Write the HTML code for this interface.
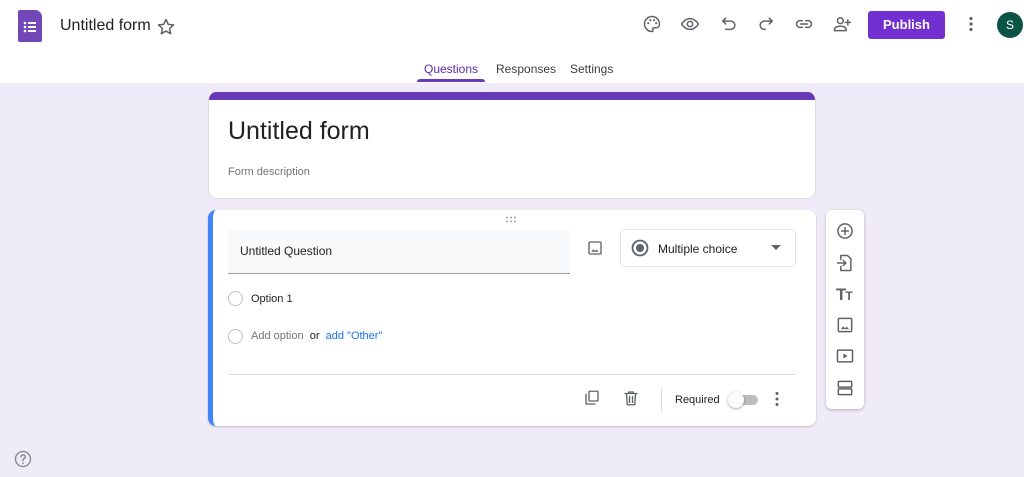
<!DOCTYPE html>
<html><head><meta charset="utf-8"><style>
*{box-sizing:border-box;margin:0;padding:0}
body{width:1024px;height:477px;background:#f0ebf8;font-family:"Liberation Sans",sans-serif;position:relative;overflow:hidden;color:#202124}
.a{position:absolute}
svg{display:block}
.ic{fill:none;stroke:#5f6368;stroke-width:1.8;stroke-linecap:round;stroke-linejoin:round}
</style></head><body>
<div class="a" style="left:0;top:0;width:1024px;height:83px;background:#fff"></div>
<!-- logo -->
<div class="a" style="left:18px;top:10px;width:24px;height:32px;background:#7248b9;border-radius:2px 7px 2px 2px"></div>
<svg class="a" style="left:18px;top:10px" width="24" height="32"><g fill="#fff"><circle cx="7" cy="13" r="1.3"/><circle cx="7" cy="17" r="1.3"/><circle cx="7" cy="21" r="1.3"/><rect x="10" y="12" width="8" height="2"/><rect x="10" y="16" width="8" height="2"/><rect x="10" y="20" width="8" height="2"/></g></svg>
<div class="a" style="left:60px;top:17px;font-size:16px;color:#202124">Untitled form</div>
<svg class="a" style="left:156px;top:17px" width="20" height="20" viewBox="0 0 24 24"><path class="ic" d="M12 3l2.7 5.8 6.3.7-4.7 4.3 1.3 6.2L12 16.9 6.4 20l1.3-6.2L3 9.5l6.3-.7z"/></svg>
<!-- top icons -->
<svg class="a" style="left:642px;top:14px" width="20" height="20" viewBox="0 0 24 24"><path class="ic" d="M12 3a9 9 0 0 0 0 18c1.2 0 1.5-1 1-2-.6-1.2.2-2.5 1.5-2.5H17a4 4 0 0 0 4-4C21 7 17 3 12 3z"/><circle cx="7.5" cy="11" r="1.3" fill="#5f6368"/><circle cx="10" cy="7.5" r="1.3" fill="#5f6368"/><circle cx="14.5" cy="7.5" r="1.3" fill="#5f6368"/><circle cx="17" cy="11" r="1.3" fill="#5f6368"/></svg>
<svg class="a" style="left:680px;top:14px" width="20" height="20" viewBox="0 0 24 24"><path class="ic" d="M2 12s3.5-6.5 10-6.5S22 12 22 12s-3.5 6.5-10 6.5S2 12 2 12z"/><circle class="ic" cx="12" cy="12" r="3.2"/></svg>
<svg class="a" style="left:719px;top:14px" width="20" height="20" viewBox="0 0 24 24"><path class="ic" d="M8 5L4.5 8.5 8 12M4.5 8.5H14a5 5 0 0 1 0 10H8"/></svg>
<svg class="a" style="left:756px;top:14px" width="20" height="20" viewBox="0 0 24 24"><path class="ic" d="M16 5l3.5 3.5L16 12M19.5 8.5H10a5 5 0 0 0 0 10h1"/></svg>
<svg class="a" style="left:794px;top:14px" width="20" height="20" viewBox="0 0 24 24"><path class="ic" d="M10 8H7a4 4 0 0 0 0 8h3M14 8h3a4 4 0 0 1 0 8h-3M8 12h8"/></svg>
<svg class="a" style="left:832px;top:14px" width="20" height="20" viewBox="0 0 24 24"><circle class="ic" cx="10" cy="8" r="3.5"/><path class="ic" d="M3 20v-1.5c0-2.5 4-4 7-4s7 1.5 7 4V20zM19 7v6M16 10h6"/></svg>
<div class="a" style="left:868px;top:11px;width:77px;height:28px;background:#7330d0;border-radius:3px;color:#fff;font-size:13px;font-weight:bold;text-align:center;line-height:28px">Publish</div>
<svg class="a" style="left:961px;top:14px" width="20" height="20"><g fill="#5f6368"><circle cx="10" cy="4.5" r="1.6"/><circle cx="10" cy="10" r="1.6"/><circle cx="10" cy="15.5" r="1.6"/></g></svg>
<div class="a" style="left:997px;top:12px;width:26px;height:26px;border-radius:50%;background:#0b5345;color:#fff;font-size:12px;text-align:center;line-height:26px">S</div>
<!-- tabs -->
<div class="a" style="left:424px;top:62px;font-size:12px;color:#5e2ca5">Questions</div>
<div class="a" style="left:417px;top:79px;width:68px;height:3px;background:#673ab7;border-radius:3px 3px 0 0"></div>
<div class="a" style="left:496px;top:62px;font-size:12px;color:#3c4043">Responses</div>
<div class="a" style="left:570px;top:62px;font-size:12px;color:#3c4043">Settings</div>
<!-- title card -->
<div class="a" style="left:208px;top:92px;width:608px;height:107px;background:#fff;border-radius:8px;overflow:hidden;border:1px solid #dadce0;border-top:none"><div style="height:8px;background:#673ab7"></div></div>
<div class="a" style="left:228px;top:117px;font-size:25px;color:#202124">Untitled form</div>
<div class="a" style="left:228px;top:166px;font-size:11px;color:#70757a">Form description</div>
<!-- question card -->
<div class="a" style="left:208px;top:210px;width:608px;height:216px;background:#fff;border-radius:8px;border-left:5px solid #4285f4;box-shadow:0 1px 2px rgba(0,0,0,.2)"></div>
<svg class="a" style="left:505px;top:216px" width="14" height="8"><g fill="#9aa0a6"><circle cx="2" cy="1.5" r="1"/><circle cx="6" cy="1.5" r="1"/><circle cx="10" cy="1.5" r="1"/><circle cx="2" cy="5.5" r="1"/><circle cx="6" cy="5.5" r="1"/><circle cx="10" cy="5.5" r="1"/></g></svg>
<div class="a" style="left:228px;top:230px;width:342px;height:44px;background:#f8f9fa;border-bottom:1px solid #9aa0a6"></div>
<div class="a" style="left:240px;top:244px;font-size:12px;color:#202124">Untitled Question</div>
<svg class="a" style="left:586px;top:239px" width="18" height="18" viewBox="0 0 24 24"><rect class="ic" x="4" y="4" width="16" height="16" rx="1.5"/><path d="M7 17l3-3.5 2 2.5 2-2 3 3z" fill="#5f6368"/></svg>
<div class="a" style="left:620px;top:229px;width:176px;height:38px;border:1px solid #e6e6e6;border-radius:4px"></div>
<svg class="a" style="left:630px;top:238px" width="20" height="20"><circle cx="10" cy="10" r="7.5" fill="none" stroke="#5f6368" stroke-width="1.8"/><circle cx="10" cy="10" r="4" fill="#5f6368"/></svg>
<div class="a" style="left:658px;top:242px;font-size:12px;color:#202124">Multiple choice</div>
<svg class="a" style="left:771px;top:245px" width="10" height="6"><path d="M0 0h10L5 5z" fill="#5f6368"/></svg>
<div class="a" style="left:228px;top:291px;width:15px;height:15px;border:1.5px solid #bdc1c6;border-radius:50%"></div>
<div class="a" style="left:251px;top:293px;font-size:11px;color:#202124">Option 1</div>
<div class="a" style="left:228px;top:329px;width:15px;height:15px;border:1.5px solid #bdc1c6;border-radius:50%"></div>
<div class="a" style="left:251px;top:330px;font-size:11px;color:#70757a">Add option <span style="color:#202124">&nbsp;or&nbsp;</span> <span style="color:#1a73e8">add "Other"</span></div>
<div class="a" style="left:228px;top:374px;width:568px;height:1px;background:#dadce0"></div>
<svg class="a" style="left:583px;top:389px" width="18" height="18" viewBox="0 0 24 24"><path class="ic" d="M4 7v13h12"/><rect class="ic" x="8" y="3" width="12" height="13" rx="1"/></svg>
<svg class="a" style="left:622px;top:389px" width="18" height="18" viewBox="0 0 24 24"><path class="ic" d="M4 6h16M9 6V4h6v2M6 6l1 15h10l1-15M10 10v8M14 10v8"/></svg>
<div class="a" style="left:661px;top:388px;width:1px;height:24px;background:#dadce0"></div>
<div class="a" style="left:675px;top:394px;font-size:11px;color:#202124">Required</div>
<div class="a" style="left:731px;top:395px;width:27px;height:10px;background:#bdbdbd;border-radius:5px"></div>
<div class="a" style="left:728px;top:392px;width:16px;height:16px;background:#fafafa;border-radius:50%;box-shadow:0 1px 3px rgba(0,0,0,.35)"></div>
<svg class="a" style="left:768px;top:390px" width="18" height="18"><g fill="#5f6368"><circle cx="9" cy="3.5" r="1.5"/><circle cx="9" cy="9" r="1.5"/><circle cx="9" cy="14.5" r="1.5"/></g></svg>
<!-- side toolbar -->
<div class="a" style="left:826px;top:210px;width:38px;height:199px;background:#fff;border-radius:6px;box-shadow:0 1px 3px rgba(0,0,0,.25)"></div>
<svg class="a" style="left:835px;top:221px" width="20" height="20" viewBox="0 0 24 24"><circle class="ic" cx="12" cy="12" r="8.5"/><path class="ic" d="M12 8v8M8 12h8"/></svg>
<svg class="a" style="left:835px;top:253px" width="20" height="20" viewBox="0 0 24 24"><path class="ic" d="M7 8V3h8l4 4v14H7v-5M3 12h10M10 9l3 3-3 3"/></svg>
<div class="a" style="left:836px;top:285px;font-size:17px;font-weight:bold;color:#5f6368;letter-spacing:-1px">T<span style="font-size:12px">T</span></div>
<svg class="a" style="left:835px;top:315px" width="20" height="20" viewBox="0 0 24 24"><rect class="ic" x="4" y="4" width="16" height="16" rx="1.5"/><path d="M7 17l3-3.5 2 2.5 2-2 3 3z" fill="#5f6368"/></svg>
<svg class="a" style="left:835px;top:346px" width="20" height="20" viewBox="0 0 24 24"><rect class="ic" x="3" y="5" width="18" height="14" rx="1"/><path d="M10 9v6l5-3z" fill="#5f6368"/></svg>
<svg class="a" style="left:835px;top:378px" width="20" height="20" viewBox="0 0 24 24"><rect class="ic" x="4" y="4" width="16" height="7" rx="1"/><rect class="ic" x="4" y="13" width="16" height="7" rx="1"/></svg>
<svg class="a" style="left:13px;top:449px" width="20" height="20" viewBox="0 0 24 24"><circle cx="12" cy="12" r="9" fill="none" stroke="#80868b" stroke-width="1.6"/><path d="M9.5 9.5a2.5 2.5 0 1 1 3.5 2.3c-.7.3-1 .8-1 1.5v.7" fill="none" stroke="#80868b" stroke-width="1.6" stroke-linecap="round"/><circle cx="12" cy="17" r="1" fill="#80868b"/></svg>
</body></html>
